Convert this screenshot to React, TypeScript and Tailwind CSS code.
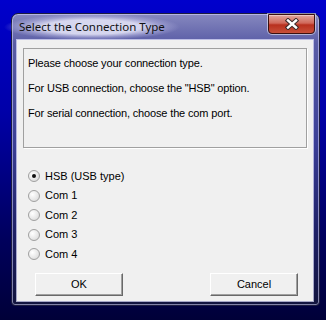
import React from "react";

function Radio({ checked }: { checked?: boolean }) {
  return (
    <span className="w-[12px] h-[12px] rounded-full border border-[#a0a0a0] bg-[radial-gradient(circle_at_35%_35%,#ffffff,#e6e6e6_60%,#d0d0d0)] flex items-center justify-center shrink-0">
      {checked && <span className="w-[4px] h-[4px] rounded-full bg-[#111]" />}
    </span>
  );
}

function Btn({ label }: { label: string }) {
  return (
    <div className="w-[88px] h-[23px] bg-[#f0f0f0] border-t border-l border-t-white border-l-white border-r border-b border-r-[#696969] border-b-[#696969] shadow-[inset_-1px_-1px_0_#a0a0a0] flex items-center justify-center text-[11px] text-black">
      {label}
    </div>
  );
}

export default function App() {
  const rows: [string, boolean][] = [
    ["HSB (USB type)", true],
    ["Com 1", false],
    ["Com 2", false],
    ["Com 3", false],
    ["Com 4", false],
  ];
  return (
    <div
      className="w-[326px] h-[320px] bg-[linear-gradient(180deg,#0000cc_0%,#0000a8_35%,#00005c_75%,#000038_100%)] pt-[13px] pl-[11px]"
      style={{ fontFamily: '"Liberation Sans", Arial, sans-serif' }}
    >
      <div className="w-[309px] h-[293px] rounded-t-[7px] rounded-b-[4px] border border-[#1c1c40] bg-[linear-gradient(180deg,#8688bf_0%,#5a5da6_10%,#3a3e96_45%,#1e2066_75%,#12143e_100%)] shadow-[inset_0_0_0_1px_rgba(220,220,255,0.55)] flex flex-col">
        <div className="h-[26px] flex items-start justify-between shrink-0">
          <div className="-ml-[8px] pt-[0px]">
            <span
              className="inline-block px-[15px] py-[5px] text-[11.5px] leading-[16px] text-[#111] bg-[radial-gradient(closest-side,rgba(225,225,245,0.9)_55%,rgba(190,190,230,0.45)_80%,rgba(150,150,210,0)_100%)]"
              style={{ fontFamily: '"Noto Sans", "Open Sans", sans-serif' }}
            >
              Select the Connection Type
            </span>
          </div>
          <div className="mr-[4px] w-[47px] h-[20px] rounded-b-[4px] border border-[#3a1010] shadow-[0_0_0_1px_rgba(255,255,255,0.5),inset_0_1px_0_rgba(255,255,255,0.4)] bg-[linear-gradient(180deg,#e0a89e_0%,#d0685a_45%,#b8301e_55%,#c8503a_100%)] flex items-center justify-center">
            <svg width="16" height="12" viewBox="0 0 16 12">
              <path d="M4 2.5 L12 9.5 M12 2.5 L4 9.5" stroke="#3a2a2a" strokeWidth="4.4" strokeLinecap="square" />
              <path d="M4 2.5 L12 9.5 M12 2.5 L4 9.5" stroke="#ffffff" strokeWidth="2.4" strokeLinecap="square" />
            </svg>
          </div>
        </div>
        <div className="ml-[5px] mr-[6px] h-[261px] shrink-0 bg-[#f0f0f0] shadow-[0_0_0_1px_rgba(230,230,255,0.7)] flex flex-col text-[11px] text-black">
          <div className="mt-[8px] mx-[6px] h-[100px] shrink-0 border border-[#a0a0a0] shadow-[1px_1px_0_#ffffff] pl-[4px] pt-[8px] flex flex-col gap-[12px] leading-[13px] tracking-[-0.15px]">
            <div>Please choose your connection type.</div>
            <div>For USB connection, choose the "HSB" option.</div>
            <div>For serial connection, choose the com port.</div>
          </div>
          <div className="mt-[18px] pl-[11px] flex flex-col shrink-0">
            {rows.map(([label, checked], i) => (
              <div key={i} className={`flex items-center gap-[5px] ${i % 2 === 0 ? "h-[20px]" : "h-[19px]"}`}>
                <Radio checked={checked} />
                <span>{label}</span>
              </div>
            ))}
          </div>
          <div className="mt-[9px] pl-[18px] pr-[15px] flex justify-between shrink-0">
            <Btn label="OK" />
            <Btn label="Cancel" />
          </div>
        </div>
      </div>
    </div>
  );
}
